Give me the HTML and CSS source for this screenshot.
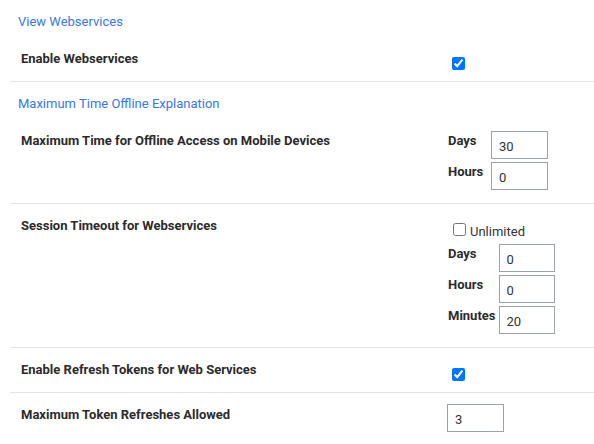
FILE: index.html
```html
<!DOCTYPE html>
<html>
<head>
<meta charset="utf-8">
<link rel="stylesheet" href="styles.css">
</head>
<body>
<div class="settings">
  <div class="row">
    <a class="help-link" href="#">View Webservices</a>
    <div class="field">
      <div class="label">Enable Webservices</div>
      <div class="value"><input class="check" type="checkbox" checked></div>
    </div>
  </div>
  <div class="row">
    <a class="help-link" href="#">Maximum Time Offline Explanation</a>
    <div class="field">
      <div class="label">Maximum Time for Offline Access on Mobile Devices</div>
      <div class="value value-inputs">
        <div class="grid">
          <span class="sub-label">Days</span><input class="num" type="text" value="30">
          <span class="sub-label">Hours</span><input class="num" type="text" value="0">
        </div>
      </div>
    </div>
  </div>
  <div class="row">
    <div class="field">
      <div class="label">Session Timeout for Webservices</div>
      <div class="value">
        <label class="unlimited"><input class="check check-inline" type="checkbox"><span>Unlimited</span></label>
        <div class="grid grid-session">
          <span class="sub-label">Days</span><input class="num num-session" type="text" value="0">
          <span class="sub-label">Hours</span><input class="num num-session" type="text" value="0">
          <span class="sub-label">Minutes</span><input class="num num-session" type="text" value="20">
        </div>
      </div>
    </div>
  </div>
  <div class="row">
    <div class="field">
      <div class="label">Enable Refresh Tokens for Web Services</div>
      <div class="value"><input class="check" type="checkbox" checked></div>
    </div>
  </div>
  <div class="row row-last">
    <div class="field">
      <div class="label">Maximum Token Refreshes Allowed</div>
      <div class="value value-single"><input class="num" type="text" value="3"></div>
    </div>
  </div>
</div>
</body>
</html>
```
FILE: styles.css
```css
* { box-sizing: border-box; }
html, body {
  margin: 0;
  padding: 0;
  background: #fff;
}
body {
  font-family: Roboto, "Liberation Sans", Arial, sans-serif;
  font-size: 13px;
  color: #333;
}
.settings {
  margin-left: 10px;
}
.row {
  padding: 14px 0 13px 0;
  border-bottom: 1px solid #e2e4e6;
}
.row-last {
  border-bottom: none;
}
.help-link {
  display: block;
  padding-left: 8px;
  line-height: 16px;
  color: #3a78dc;
  text-decoration: none;
  margin-bottom: 21px;
}
.field {
  display: flex;
  align-items: flex-start;
}
.label {
  width: 437px;
  padding-left: 11px;
  font-weight: bold;
  line-height: 16px;
  color: #2b2b2b;
  flex-shrink: 0;
}
.value {
  display: flex;
  flex-direction: column;
}
.value-inputs {
  margin-top: -2px;
}
.value-single {
  margin-top: -3px;
}
.check {
  display: block;
  width: 13px;
  height: 13px;
  margin: 6px 0 -2px 5px;
  accent-color: #0075ff;
}
.unlimited {
  display: flex;
  align-items: center;
  margin-top: 4px;
  gap: 4px;
  line-height: 16px;
  color: #333;
}
.check-inline {
  margin: 0 0 0 6px;
  position: relative;
  top: -1px;
}
.unlimited span {
  position: relative;
  top: 2px;
}
.grid {
  display: grid;
  grid-template-columns: auto auto;
  row-gap: 3px;
  align-items: start;
}
.grid-session {
  margin-top: 6px;
}
.sub-label {
  min-width: 44px;
  padding: 2px 3px 0 1px;
  font-weight: bold;
  line-height: 16px;
  color: #2b2b2b;
}
.num {
  width: 57px;
  height: 28px;
  border: 1px solid #9aa3ab;
  border-radius: 0;
  padding: 3px 7px 0 7px;
  font-family: Roboto, "Liberation Sans", Arial, sans-serif;
  font-size: 13px;
  color: #333;
  background: #fff;
  outline: none;
}
.num-session {
  width: 56px;
}
```
